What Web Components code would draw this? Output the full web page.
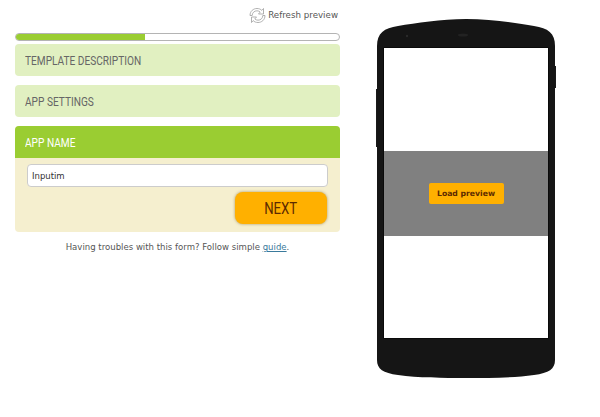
<!DOCTYPE html>
<html><head><meta charset="utf-8"><style>
html,body{margin:0;padding:0;background:#fff}
body{width:600px;height:417px;overflow:hidden;font-family:"DejaVu Sans",sans-serif}
</style></head><body>
<app-page>
  <form-column slot="left">
    <refresh-link>Refresh preview</refresh-link>
    <progress-bar></progress-bar>
    <step-panel title="TEMPLATE DESCRIPTION"></step-panel>
    <step-panel title="APP SETTINGS"></step-panel>
    <step-panel title="APP NAME" open>
      <name-form value="Inputim"></name-form>
    </step-panel>
    <help-note></help-note>
  </form-column>
  <phone-preview slot="right"></phone-preview>
</app-page>
<script>
function def(name, html){
  customElements.define(name, class extends HTMLElement{
    constructor(){super();this.attachShadow({mode:'open'}).innerHTML=typeof html==='function'?html(this):html;}
  });
}
const NARROW='"Roboto",sans-serif';
def('app-page',`<style>:host{display:flex;width:600px;height:417px}
.l{display:block;width:325px;margin-left:15px}.r{display:block;margin-left:37px;margin-top:19px}</style>
<div class="l"><slot name="left"></slot></div><div class="r"><slot name="right"></slot></div>`);
def('form-column',`<style>:host{display:flex;flex-direction:column}</style><slot></slot>`);
def('refresh-link',`<style>:host{display:flex;justify-content:flex-end;align-items:center;height:33px;box-sizing:border-box;font:8.7px "DejaVu Sans",sans-serif;color:#555;padding-right:2px;gap:2px}
svg{display:block;margin-top:-2px}span{margin-top:-4px}</style>
<svg width="17" height="17" viewBox="0 0 17 17" fill="none" stroke="#a8a8a8" stroke-width=".9"><path d="M1 8.500C1 4 4.500 1.500 8 1.500c2 0 3.700.7 4.800 1.900L14.500 1.500V7H9.500l1.700-1.900C10.400 4.300 9.300 3.800 8 3.800 5.300 3.800 3.200 5.800 3.200 8.500z"/><path d="M16 8.500c0 4.500-3.500 7-7 7-2 0-3.700-.7-4.800-1.900L2.500 15.500V10h5l-1.700 1.900c.8.800 1.900 1.300 3.200 1.300 2.700 0 4.800-2 4.800-4.700z"/></svg><span><slot></slot></span>`);
def('progress-bar',`<style>:host{display:block;height:8px;box-sizing:border-box;border:1px solid #b4b4b4;border-radius:4px;background:#fff;overflow:hidden}
div{width:130px;margin:-1px 0 0 -1px;height:8px;background:#9acd32}</style><div></div>`);
def('step-panel',el=>{const o=el.hasAttribute('open');const t=el.getAttribute('title');
 el.removeAttribute('title');
 return `<style>:host{display:block;margin-top:${t==='TEMPLATE DESCRIPTION'?3:9}px;border-radius:4px;overflow:hidden;background:${o?'#f5efcf':'#e1f0c1'}}
.h{height:32px;padding-left:10px;font:13.500px/33px ${NARROW};color:${o?'#fff':'#666'};background:${o?'#9acd32':'transparent'}}
span{display:inline-block;transform:scaleX(.75);transform-origin:0 50%;white-space:nowrap}</style>
<div class="h"><span>${t}</span></div><slot></slot>`});
def('name-form',el=>`<style>:host{display:flex;flex-direction:column;align-items:flex-end;height:74px;box-sizing:border-box;padding:6px 12px 0 12px}
input{display:block;box-sizing:border-box;width:301px;height:23px;border:1px solid #ccc;border-radius:4px;padding:0 4px;background:#fff;font:8.500px "DejaVu Sans",sans-serif;color:#333;outline:none}
button{display:block;box-sizing:border-box;width:92px;height:32px;margin:5px 1px 0 0;border:0;border-radius:8px;background:#ffb000;box-shadow:0 0 3px rgba(120,90,20,.6);color:#5c2a00;font:16.500px ${NARROW};padding:0}
b{display:inline-block;font-weight:400;transform:scaleX(.8)}</style>
<input value="${el.getAttribute('value')}"><button><b>NEXT</b></button>`);
def('help-note',`<style>:host{display:block;text-align:center;margin-top:9px;font:8.550px/12px "DejaVu Sans",sans-serif;color:#555}a{color:#3a7a9c;text-decoration:underline}</style>Having troubles with this form? Follow simple <a href="#">guide</a>.`);
def('phone-preview',`<style>:host{display:block;position:relative;width:182px;height:364px}
svg{display:block;overflow:visible}
.screen{position:absolute;left:7px;top:29px;width:164px;height:290px;background:#fff;display:flex;align-items:center;box-shadow:0 0 0 .5px #000}
.ov{flex:1;height:85px;background:#808080;display:flex;align-items:center;justify-content:center}
button{box-sizing:border-box;width:75px;height:21px;border:0;border-radius:2px;background:#ffb000;color:#5c2a00;font:bold 7.700px "DejaVu Sans",sans-serif;padding:0}</style>
<svg width="182" height="364" viewBox="0 0 182 364"><rect x="-1" y="70" width="2" height="58" fill="#1a1a1a"/><rect x="177" y="47" width="2" height="22" fill="#1a1a1a"/>
<path d="M0 27C0 14 7 9 21 7 39 4 64 0 89 0s50 4 68 7c14 2 21 7 21 20V341c0 9-6 13-21 15-20 3-45 3-68 3s-48 0-68-3C6 354 0 350 0 341Z" fill="#151515"/>
<circle cx="30" cy="17" r="1.200" fill="#2a2a2a"/><ellipse cx="86" cy="16" rx="5" ry="1.500" fill="#222"/></svg>
<div class="screen"><div class="ov"><button>Load preview</button></div></div>`);
</script></body></html>
